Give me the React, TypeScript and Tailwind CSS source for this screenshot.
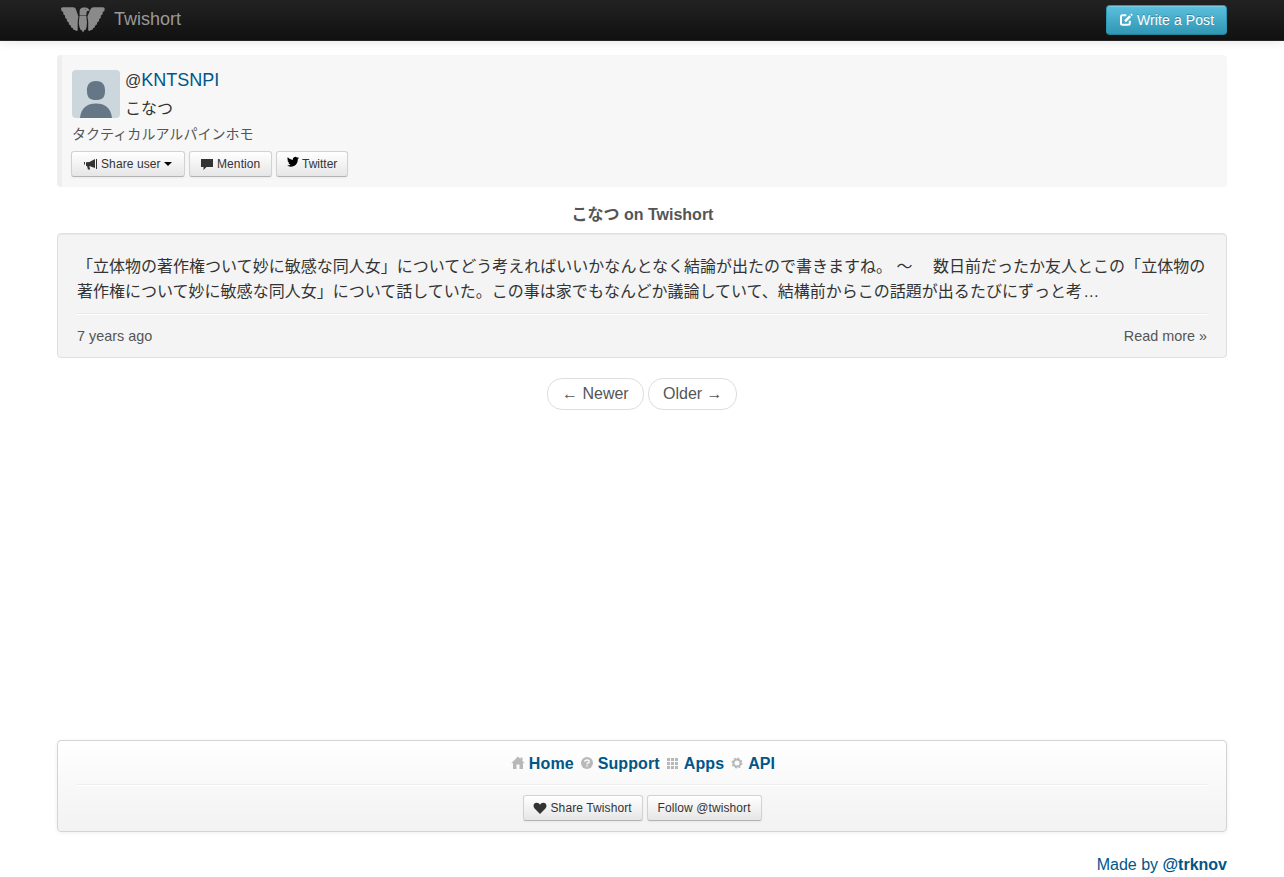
import type { ReactNode } from 'react';

const footerLinks = [
  { label: 'Home', icon: <HomeIcon /> },
  { label: 'Support', icon: <HelpIcon /> },
  { label: 'Apps', icon: <GridIcon /> },
  { label: 'API', icon: <CogIcon /> },
];

function LogoIcon() {
  return (
    <svg width="44" height="26" viewBox="0 0 44 26" fill="#8a8a8a">
      <path d="M0 1.2 Q0.5 0.2 2 0.2 H12.5 Q14.6 0.5 15.2 3 L17.4 9.5 L16.7 14.5 V23.6 L15 24 L14.2 23 L12.4 22.8 L11.7 21 L10.2 20.6 L9.5 18.3 L8 17.5 L7.6 15.2 L6 14.3 L5.7 12 L4.2 11 L4 8.5 L2.3 7.3 L2.2 5 L0.5 4 Z" />
      <path d="M43.7 1.2 Q43.2 0.2 41.7 0.2 H32.3 Q30 0.5 29.2 3 L26.4 9.5 L27.2 14.5 V23.6 L28.9 24 L29.7 23 L31.5 22.8 L32.2 21 L33.7 20.6 L34.4 18.3 L35.9 17.5 L36.3 15.2 L37.9 14.3 L38.2 12 L39.7 11 L39.9 8.5 L41.6 7.3 L41.7 5 L43.4 4 Z" />
      <path d="M18.6 8.4 V3.9 Q19 0.4 22.4 0.4 H24.6 Q27.6 0.7 28.7 3.9 Q26.4 3.2 25.7 4.5 L25.3 8.4 Z" />
      <path d="M18.5 9.1 H25.3 L26 15 Q26 20 24.6 23 L23.6 22.8 L22 25.4 L20.4 22.8 L19.5 23 Q17.7 19 17.8 15 Z" />
      <circle cx="24.5" cy="2.6" r="0.4" fill="#1d1d1d" />
    </svg>
  );
}

function EditIcon() {
  return (
    <svg width="14" height="14" viewBox="0 0 14 14" fill="none" stroke="#ffffff">
      <path d="M7.3 2.3 H3.5 Q2 2.3 2 3.8 V10.3 Q2 11.8 3.5 11.8 H9 Q10.8 11.8 10.8 10.3 V7.8" strokeWidth="2" />
      <path d="M6 8.3 L11.2 3.1" strokeWidth="2.6" />
      <path d="M11.8 1 L13.3 2.5" strokeWidth="1.6" />
    </svg>
  );
}

function MegaphoneIcon() {
  return (
    <svg width="14" height="14" viewBox="0 0 14 14" fill="#333333">
      <path d="M0 5 H1 V7.5 H0 Z M2 5.2 L5.5 5 L11 2 V11 L6 9.3 H5.2 L6.2 12.5 H4 L3 9 H2 Z M12 2 H13 V12 H12 Z" />
    </svg>
  );
}

function CommentIcon() {
  return (
    <svg width="14" height="14" viewBox="0 0 14 14" fill="#333333">
      <path d="M1 2 H13 V10 H6.5 L3.5 13 V10 H1 Z" />
    </svg>
  );
}

function TwitterIcon() {
  return (
    <svg width="12" height="12" viewBox="0 2 24 21" fill="#000000">
      <path d="M23.95 4.57a10 10 0 0 1-2.82.77 4.96 4.96 0 0 0 2.16-2.72c-.95.55-2 .95-3.13 1.18a4.92 4.92 0 0 0-8.38 4.48C7.69 8.1 4.07 6.13 1.64 3.16a4.92 4.92 0 0 0 1.52 6.57 4.9 4.9 0 0 1-2.23-.61v.06a4.92 4.92 0 0 0 3.95 4.83 5 5 0 0 1-2.21.08 4.94 4.94 0 0 0 4.6 3.42A9.87 9.87 0 0 1 0 19.54a13.99 13.99 0 0 0 7.56 2.21c9.05 0 14-7.5 14-13.98 0-.21 0-.42-.02-.63a9.94 9.94 0 0 0 2.41-2.57z" />
    </svg>
  );
}

function HeartIcon() {
  return (
    <svg width="14" height="14" viewBox="0 0 14 14" fill="#333333">
      <path d="M7 13 L1.8 7.8 C-0.8 4.8 1 1.8 3.6 1.8 C5.3 1.8 6.4 2.6 7 3.7 C7.6 2.6 8.7 1.8 10.4 1.8 C13 1.8 14.8 4.8 12.2 7.8 Z" />
    </svg>
  );
}

function HomeIcon() {
  return (
    <svg width="14" height="14" viewBox="0 0 14 14" fill="#b8b8b8">
      <path d="M7 0.5 L9.5 3 V1.5 H11.5 V5 L13.7 7.3 H12 V13 H8.5 V8.5 H5.5 V13 H2 V7.3 H0.3 Z" />
    </svg>
  );
}

function HelpIcon() {
  return (
    <svg width="14" height="14" viewBox="0 0 14 14">
      <circle cx="7" cy="7" r="6" fill="#b8b8b8" />
      <path d="M4.8 5.8 Q4.8 4 7 4 Q9.2 4 9.2 5.6 Q9.2 6.5 8 7 Q7 7.4 7 8.2" fill="none" stroke="#fbfbfb" strokeWidth="1.5" />
      <path d="M6.2 9.2 H7.8 V10.6 H6.2 Z" fill="#fbfbfb" />
    </svg>
  );
}

function GridIcon() {
  return (
    <svg width="14" height="14" viewBox="0 0 14 14" fill="#b8b8b8">
      <path d="M1 2h3v3H1z M5 2h3v3H5z M9 2h3v3H9z M1 6h3v3H1z M5 6h3v3H5z M9 6h3v3H9z M1 10h3v3H1z M5 10h3v3H5z M9 10h3v3H9z" />
    </svg>
  );
}

function CogIcon() {
  return (
    <svg width="14" height="14" viewBox="0 0 14 14" fill="none" stroke="#b8b8b8">
      <circle cx="7" cy="7" r="3.5" strokeWidth="2" />
      <circle cx="7" cy="7" r="4.8" strokeWidth="1.4" strokeDasharray="1.88 1.88" />
    </svg>
  );
}

function SmallButton({ className, children }: { className: string; children: ReactNode }) {
  return (
    <button
      className={`flex h-[26px] items-center rounded-[3px] border border-[#d2d2d2] border-b-[#b3b3b3] bg-linear-to-b from-white to-[#e6e6e6] text-xs tracking-[0.1px] whitespace-nowrap text-[#333333] shadow-[inset_0_1px_0_rgba(255,255,255,0.2),0_1px_2px_rgba(0,0,0,0.05)] ${className}`}
    >
      {children}
    </button>
  );
}

export default function App() {
  return (
    <div className="min-h-[877px] bg-white font-['Liberation_Sans','Noto_Sans_CJK_JP',sans-serif] text-base text-[#333333]">
      {/* Top bar */}
      <header className="h-[41px] border-b border-[#252525] bg-linear-to-b from-[#222222] to-[#111111] shadow-[0_1px_10px_rgba(0,0,0,0.1)]">
        <div className="mx-auto flex w-[1170px] items-start justify-between">
          <a className="flex pt-[7px] pl-1">
            <LogoIcon />
            <span className="ml-[9px] text-lg leading-6 text-[#999999]">Twishort</span>
          </a>
          <button className="mt-[5px] flex h-[30px] w-[121px] items-center rounded-[4px] border border-[#2f96b4] border-b-[#267f99] bg-linear-to-b from-[#5bc0de] to-[#2f96b4] pl-3 text-sm text-white shadow-[inset_0_1px_0_rgba(255,255,255,0.2)] [text-shadow:0_-1px_0_rgba(0,0,0,0.25)]">
            <EditIcon />
            <span className="ml-1 tracking-[0.1px] whitespace-nowrap">Write a Post</span>
          </button>
        </div>
      </header>

      <main className="mx-auto w-[1170px] pt-3.5">
        {/* Profile */}
        <section className="h-[132px] rounded-[4px] border-l-5 border-[#eeeeee] bg-[#f7f7f7] pt-[15px] pl-[9px]">
          <div className="flex pl-px">
            <svg width="48" height="48" viewBox="0 0 48 48" className="rounded-[4px] bg-[#ccd6dd]">
              <path d="M24 11 C31 11 33.5 15.5 33 22 C32.6 28 30 30 24 30 C18 30 15.4 28 15 22 C14.5 15.5 17 11 24 11 Z M8 48 C9 38 15 33.5 24 33.5 C33 33.5 39 38 40 48 Z" fill="#657786" />
            </svg>
            <div className="ml-[5px]">
              <div className="h-[25px] leading-[21px]">
                @<a className="text-lg leading-[21px] text-[#005689]">KNTSNPI</a>
              </div>
              <div className="h-[25px] leading-[27px]">こなつ</div>
            </div>
          </div>
          <p className="mt-1 h-5 pl-px text-sm leading-5 tracking-[0.05px] text-[#555555]">タクティカルアルパインホモ</p>
          <div className="mt-[7px] flex gap-1">
            <SmallButton className="w-[114px] pl-3">
              <MegaphoneIcon />
              <span className="ml-[3px]">Share user</span>
              <span className="ml-[3px] border-x-4 border-t-4 border-x-transparent border-t-black" />
            </SmallButton>
            <SmallButton className="w-[83px] pl-2.5">
              <CommentIcon />
              <span className="ml-[3px]">Mention</span>
            </SmallButton>
            <SmallButton className="w-[72px] pl-2.5">
              <span className="mb-[5px]">
                <TwitterIcon />
              </span>
              <span className="ml-[3px] tracking-normal">Twitter</span>
            </SmallButton>
          </div>
        </section>

        <h1 className="mt-[15px] h-[31px] pl-px text-center leading-[25px] font-bold text-[#555555]">
          こなつ on Twishort
        </h1>

        {/* Post */}
        <article className="h-[125px] rounded-[4px] border border-[#e0e0e0] bg-[#f4f4f4] px-[19px] pt-5 shadow-[inset_0_1px_1px_rgba(0,0,0,0.05)]">
          <p className="leading-[25px] tracking-[0.01px] whitespace-nowrap">
            「立体物の著作権ついて妙に敏感な同人女」についてどう考えればいいかなんとなく結論が出たので書きますね。 〜　 数日前だったか友人とこの「立体物の
            <br />
            著作権について妙に敏感な同人女」について話していた。この事は家でもなんどか議論していて、結構前からこの話題が出るたびにずっと考
            <span className="ml-px">…</span>
          </p>
          <hr className="mt-[9px] h-0.5 border-t border-b border-t-[#eaeaea] border-b-white" />
          <div className="flex justify-between pt-[9px] text-[14.4px] leading-[25px] text-[#555555]">
            <span>7 years ago</span>
            <a>Read more »</a>
          </div>
        </article>

        <nav className="mt-5 flex h-8 justify-center gap-1 text-[#555555]">
          <a className="flex w-[97px] items-center rounded-[15px] border border-[#dddddd] pl-3.5">← Newer</a>
          <a className="flex w-[89px] items-center rounded-[15px] border border-[#dddddd] pl-3.5">Older →</a>
        </nav>
      </main>

      {/* Footer */}
      <footer className="mx-auto mt-[330px] w-[1170px]">
        <div className="h-[92px] rounded-[4px] border border-[#d4d4d4] bg-linear-to-b from-white to-[#f2f2f2] px-[19px] pt-[10px] shadow-[0_1px_4px_rgba(0,0,0,0.067)]">
          <div className="flex h-[25px] justify-center gap-[6px] pl-0.5 font-bold tracking-[0.1px] text-[#005689]">
            {footerLinks.map((link) => (
              <a key={link.label} className="flex items-center gap-1">
                <span className="mb-0.5">{link.icon}</span>
                <span>{link.label}</span>
              </a>
            ))}
          </div>
          <hr className="mt-2 h-0.5 border-t border-b border-t-[#eeeeee] border-b-white" />
          <div className="mt-[9px] flex justify-center gap-1">
            <SmallButton className="w-[120px] pl-[9px]">
              <HeartIcon />
              <span className="ml-1">Share Twishort</span>
            </SmallButton>
            <SmallButton className="w-[115px] pl-2.5">Follow @twishort</SmallButton>
          </div>
        </div>
        <p className="h-[45px] pt-5 text-right leading-[25px] text-[#005689]">
          Made by <b>@trknov</b>
        </p>
      </footer>
    </div>
  );
}
